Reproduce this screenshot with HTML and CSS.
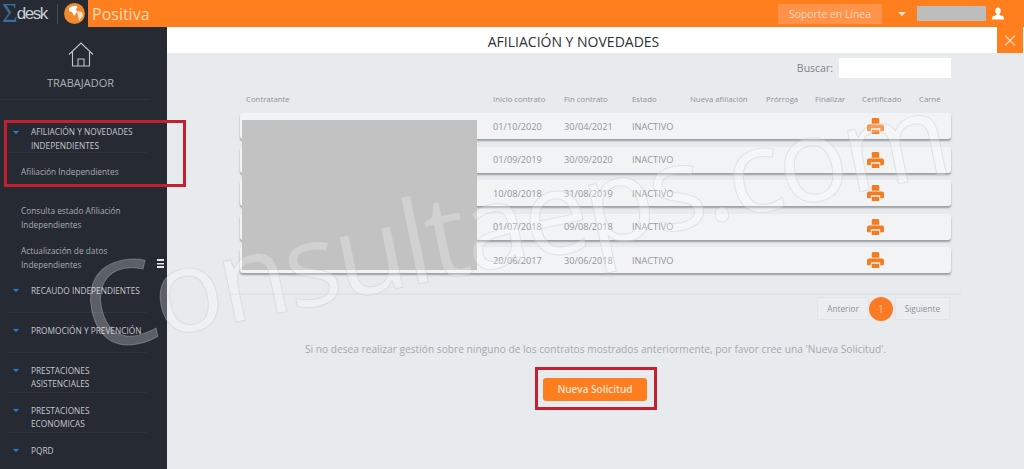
FILE: index.html
```html
<!DOCTYPE html>
<html lang="es">
<head>
  <meta charset="UTF-8">
  <meta name="viewport" content="width=device-width, initial-scale=1.0">
  <title>Afiliación y Novedades</title>
  <link rel="stylesheet" href="styles.css">
</head>
<body>

<svg class="sprites" width="0" height="0">
  <symbol id="printer" viewBox="0 0 18 17">
    <path d="M5 1.500q0-1.500 1.500-1.500h5q1.500 0 1.500 1.500v4.500h-8z"/>
    <path d="M2 7h14q2 0 2 2v4q0 1-1 1h-3v-3h-10v3h-3q-1 0-1-1v-4q0-2 2-2z"/>
    <path d="M5 12.500h8v4.500h-8z"/>
  </symbol>
</svg>

<header class="topbar">
  <div class="brand">
    <span class="sigma">Σ</span><span class="desk">desk</span>
    <span class="brand-sep"></span>
    <svg class="globe" width="21" height="21" viewBox="0 0 21 21">
      <circle cx="10.500" cy="10.500" r="10.500" fill="#f08a2c"/>
      <path d="M5 5q4-3 8-2 1 2-1 3l1 3-3 4-2-4-3-1z" fill="#fff"/>
      <path d="M13 8l5 1 1 4-4 5-1-5z" fill="#fbe3c8"/>
    </svg>
  </div>
  <div class="topbar-main">
    <span class="company">Positiva</span>
    <div class="topbar-right">
      <button class="support">Soporte en Línea</button>
      <span class="caret"></span>
      <span class="user-name"></span>
      <svg class="user-icon" width="12" height="13" viewBox="0 0 13 13">
        <path d="M6.500 0c2 0 3 1.500 3 3.500 0 1.500-.6 2.700-1.500 3.500v1l4 1.500q1 .5 1 3.500h-13q0-3 1-3.500l4-1.500v-1c-.9-.8-1.500-2-1.500-3.500 0-2 1-3.500 3-3.500z" fill="#fff"/>
      </svg>
    </div>
  </div>
</header>

<div class="layout">
  <aside class="sidebar">
    <div class="home">
      <svg width="26" height="25" viewBox="0 0 26 25" fill="none" stroke="#c2c5c9" stroke-width="1.100">
        <path d="M1 12.500 13 1l12 11.500M4.500 10v14h17V10M10 24v-7h6v7"/>
      </svg>
      <span class="home-label">TRABAJADOR</span>
    </div>
    <nav class="menu">
      <a class="menu-head first">AFILIACIÓN Y NOVEDADES<br>INDEPENDIENTES</a>
      <a class="menu-sub sub-active">Afiliación Independientes</a>
      <a class="menu-sub sub-consulta">Consulta estado Afiliación<br>Independientes</a>
      <a class="menu-sub sub-datos">Actualización de datos<br>Independientes</a>
      <a class="menu-head">RECAUDO INDEPENDIENTES</a>
      <a class="menu-head">PROMOCIÓN Y PREVENCIÓN</a>
      <a class="menu-head">PRESTACIONES<br>ASISTENCIALES</a>
      <a class="menu-head">PRESTACIONES<br>ECONOMICAS</a>
      <a class="menu-head last">PQRD</a>
    </nav>
    <span class="burger"></span>
  </aside>

  <main class="content">
    <div class="title-bar">
      <h1>AFILIACIÓN Y NOVEDADES</h1>
      <button class="close">×</button>
    </div>

    <div class="panel">
      <div class="search">
        <label>Buscar:</label>
        <input type="text">
      </div>

      <div class="row head">
        <span class="first-col">Contratante</span>
        <span>Inicio contrato</span>
        <span>Fin contrato</span>
        <span>Estado</span>
        <span>Nueva afiliación</span>
        <span>Prórroga</span>
        <span>Finalizar</span>
        <span>Certificado</span>
        <span>Carné</span>
      </div>

      <div class="row item">
        <span></span><span>01/10/2020</span><span>30/04/2021</span><span>INACTIVO</span><span></span><span></span><span></span>
        <svg class="print"><use href="#printer"/></svg><span></span>
      </div>
      <div class="row item">
        <span></span><span>01/09/2019</span><span>30/09/2020</span><span>INACTIVO</span><span></span><span></span><span></span>
        <svg class="print"><use href="#printer"/></svg><span></span>
      </div>
      <div class="row item">
        <span></span><span>10/08/2018</span><span>31/08/2019</span><span>INACTIVO</span><span></span><span></span><span></span>
        <svg class="print"><use href="#printer"/></svg><span></span>
      </div>
      <div class="row item">
        <span></span><span>01/07/2018</span><span>09/08/2018</span><span>INACTIVO</span><span></span><span></span><span></span>
        <svg class="print"><use href="#printer"/></svg><span></span>
      </div>
      <div class="row item">
        <span></span><span>20/06/2017</span><span>30/06/2018</span><span>INACTIVO</span><span></span><span></span><span></span>
        <svg class="print"><use href="#printer"/></svg><span></span>
      </div>

      <div class="pager">
        <button>Anterior</button>
        <span class="page-num">1</span>
        <button>Siguiente</button>
      </div>

      <p class="hint">Si no desea realizar gestión sobre ninguno de los contratos mostrados anteriormente, por favor cree una 'Nueva Solicitud'.</p>
      <div class="actions">
        <button class="new-request">Nueva Solicitud</button>
      </div>
    </div>
  </main>
</div>

<!-- cosas encima de la captura -->
<div class="redacted"></div>
<div class="mark mark-menu"></div>
<div class="mark mark-button"></div>
<div class="watermark">Consultaeps.com</div>

</body>
</html>
```

FILE: styles.css
```css
* {
  box-sizing: border-box;
}
html, body {
  height: 469px;
  overflow: hidden;
}
body {
  margin: 0;
  font-family: "Open Sans", sans-serif;
  background-color: #e8ebee;
  color: #7d8288;
}
button {
  font-family: inherit;
}
.sprites {
  position: absolute;
}

/* barra superior */
.topbar {
  display: flex;
  height: 27px;
}
.brand {
  display: flex;
  align-items: center;
  width: 88px;
  padding-left: 2px;
  background-color: #252a33;
}
.sigma {
  font-family: "Liberation Serif", serif;
  font-size: 27px;
  line-height: 27px;
  color: #3d6c9c;
}
.desk {
  font-family: "Liberation Sans", sans-serif;
  font-size: 17px;
  letter-spacing: -1.500px;
  color: #c9ced3;
  margin-left: -1px;
}
.brand-sep {
  width: 1px;
  height: 20px;
  margin: 0 6px 0 10px;
  background-color: #4a4e56;
}
.globe {
  flex: none;
}
.topbar-main {
  flex: 1;
  display: flex;
  align-items: center;
  justify-content: space-between;
  background-color: #ff7f1e;
  padding-left: 4px;
}
.company {
  font-size: 16px;
  color: #fddcb8;
}
.topbar-right {
  display: flex;
  align-items: center;
  padding-right: 20px;
}
.support {
  width: 104px;
  height: 20px;
  padding: 0;
  border: none;
  background-color: #ff934a;
  color: #fdd9bb;
  font-size: 10.400px;
}
.caret {
  width: 0;
  height: 0;
  margin: 0 11px 0 16px;
  border-left: 4px solid transparent;
  border-right: 4px solid transparent;
  border-top: 4px solid #fbe3d0;
}
.user-name {
  width: 69px;
  height: 15px;
  margin-right: 6px;
  background-color: #bdbdbd;
}
.user-icon {
  flex: none;
}

/* menu lateral */
.layout {
  display: flex;
  height: 442px;
}
.sidebar {
  position: relative;
  width: 167px;
  flex: none;
  background-color: #252a33;
  color: #c5c8cc;
}
.home {
  display: flex;
  flex-direction: column;
  align-items: center;
  height: 73px;
  margin-right: 19px;
  padding: 15px 0 0 13px;
  border-bottom: 1px solid #2f343d;
}
.home-label {
  margin-top: 8px;
  font-size: 11px;
  color: #b0b3b7;
}
.menu {
  display: flex;
  flex-direction: column;
  padding-top: 18px;
  font-size: 8.300px;
  line-height: 13.500px;
}
.menu a {
  display: block;
}
.menu-head {
  position: relative;
  height: 40px;
  margin: 0 20px 0 8px;
  padding: 10.500px 0 0 23px;
  border-bottom: 1px solid #2e333c;
}
.menu-head::before {
  content: "";
  position: absolute;
  left: 5px;
  top: 16px;
  border-left: 3.500px solid transparent;
  border-right: 3.500px solid transparent;
  border-top: 3.500px solid #2c7fd6;
}
.first {
  height: 35px;
  padding-top: 7px;
}
.first::before {
  top: 13px;
}
.last {
  border-bottom: none;
}
.menu-sub {
  padding: 0 0 0 21px;
  color: #a9acb1;
}
.sub-active {
  height: 51px;
  padding-top: 12px;
}
.sub-consulta {
  height: 40px;
}
.sub-datos {
  height: 29px;
}
.burger {
  position: absolute;
  right: 3px;
  top: 232px;
  width: 7px;
  height: 9px;
  border-top: 2px solid #e6e6e6;
  border-bottom: 2px solid #e6e6e6;
  background: linear-gradient(#e6e6e6, #e6e6e6) center / 100% 1.500px no-repeat;
}

/* contenido */
.content {
  flex: 1;
  min-width: 0;
}
.title-bar {
  position: relative;
  height: 26px;
  padding-right: 44px;
  background-color: #fff;
  text-align: center;
}
.title-bar h1 {
  margin: 0;
  font-size: 14px;
  font-weight: 400;
  line-height: 29px;
  color: #2e3136;
}
.close {
  position: absolute;
  top: 0;
  right: 1px;
  width: 26px;
  height: 26px;
  padding: 0;
  border: none;
  background-color: #ff7f1e;
  color: #fde3cc;
  font-size: 24px;
  font-weight: 300;
  line-height: 24px;
}
.panel {
  padding: 5px 73px 0 73px;
}
.search {
  display: flex;
  justify-content: flex-end;
  align-items: center;
  gap: 6px;
  height: 20px;
  font-size: 10.500px;
  color: #7d8288;
}
.search input {
  width: 112px;
  height: 20px;
  border: none;
  background-color: #fff;
}
.row {
  display: grid;
  grid-template-columns: 253px 71px 68px 58px 76px 49px 47px 57px 1fr;
  align-items: center;
  width: 711px;
}
.head {
  height: 28px;
  margin-top: 7px;
  font-size: 7.800px;
  color: #8d9196;
}
.first-col {
  padding-left: 6px;
}
.item {
  height: 26px;
  margin-bottom: 7.500px;
  background-color: #f2f3f4;
  border-radius: 3px;
  box-shadow: 0 2px 2px #9a9da1;
  font-size: 9.200px;
  color: #92969b;
}
.print {
  width: 17px;
  height: 16px;
  margin-left: 5px;
  fill: #f57b20;
}
.pager {
  display: flex;
  justify-content: flex-end;
  align-items: center;
  height: 29px;
  margin: 20px -10px 0 -10px;
  padding-right: 11px;
  border-top: 2px solid #dfe2e5;
}
.pager button {
  height: 23px;
  padding: 0 9px;
  border: 1px solid #e2e4e7;
  background-color: #ebedf0;
  color: #8e9298;
  font-size: 8.200px;
}
.page-num {
  width: 24px;
  height: 24px;
  margin: 0 2px 0 0;
  border-radius: 50%;
  background-color: #fb7b25;
  color: #fbc9a5;
  font-size: 10px;
  line-height: 24px;
  text-align: center;
}
.hint {
  margin: 20px 0 0;
  text-align: center;
  font-size: 10.200px;
  line-height: 14px;
  color: #a5a9ae;
  white-space: nowrap;
}
.actions {
  margin-top: 20px;
  text-align: center;
}
.new-request {
  width: 104px;
  height: 23px;
  margin-left: -1px;
  padding: 0;
  border: none;
  border-radius: 3px;
  background-color: #fd7d1f;
  color: #fde5d2;
  font-size: 10px;
  font-weight: 600;
}

/* capas superpuestas */
.redacted {
  position: absolute;
  left: 242px;
  top: 120px;
  width: 235px;
  height: 150px;
  background-color: #c2c2c2;
}
.mark {
  position: absolute;
  border: 3px solid #c4202f;
}
.mark-menu {
  left: 4px;
  top: 120px;
  width: 182px;
  height: 67px;
}
.mark-button {
  left: 535px;
  top: 367px;
  width: 122px;
  height: 43px;
}
.watermark {
  position: absolute;
  left: 84px;
  top: 250px;
  font-family: "Open Sans", sans-serif;
  font-size: 116px;
  font-weight: 400;
  line-height: 1;
  letter-spacing: -3.500px;
  white-space: nowrap;
  color: rgba(255, 255, 255, .25);
  -webkit-text-stroke: 1px rgba(190, 193, 197, .35);
  transform: rotate(-11.800deg);
  transform-origin: left center;
  pointer-events: none;
}
```
